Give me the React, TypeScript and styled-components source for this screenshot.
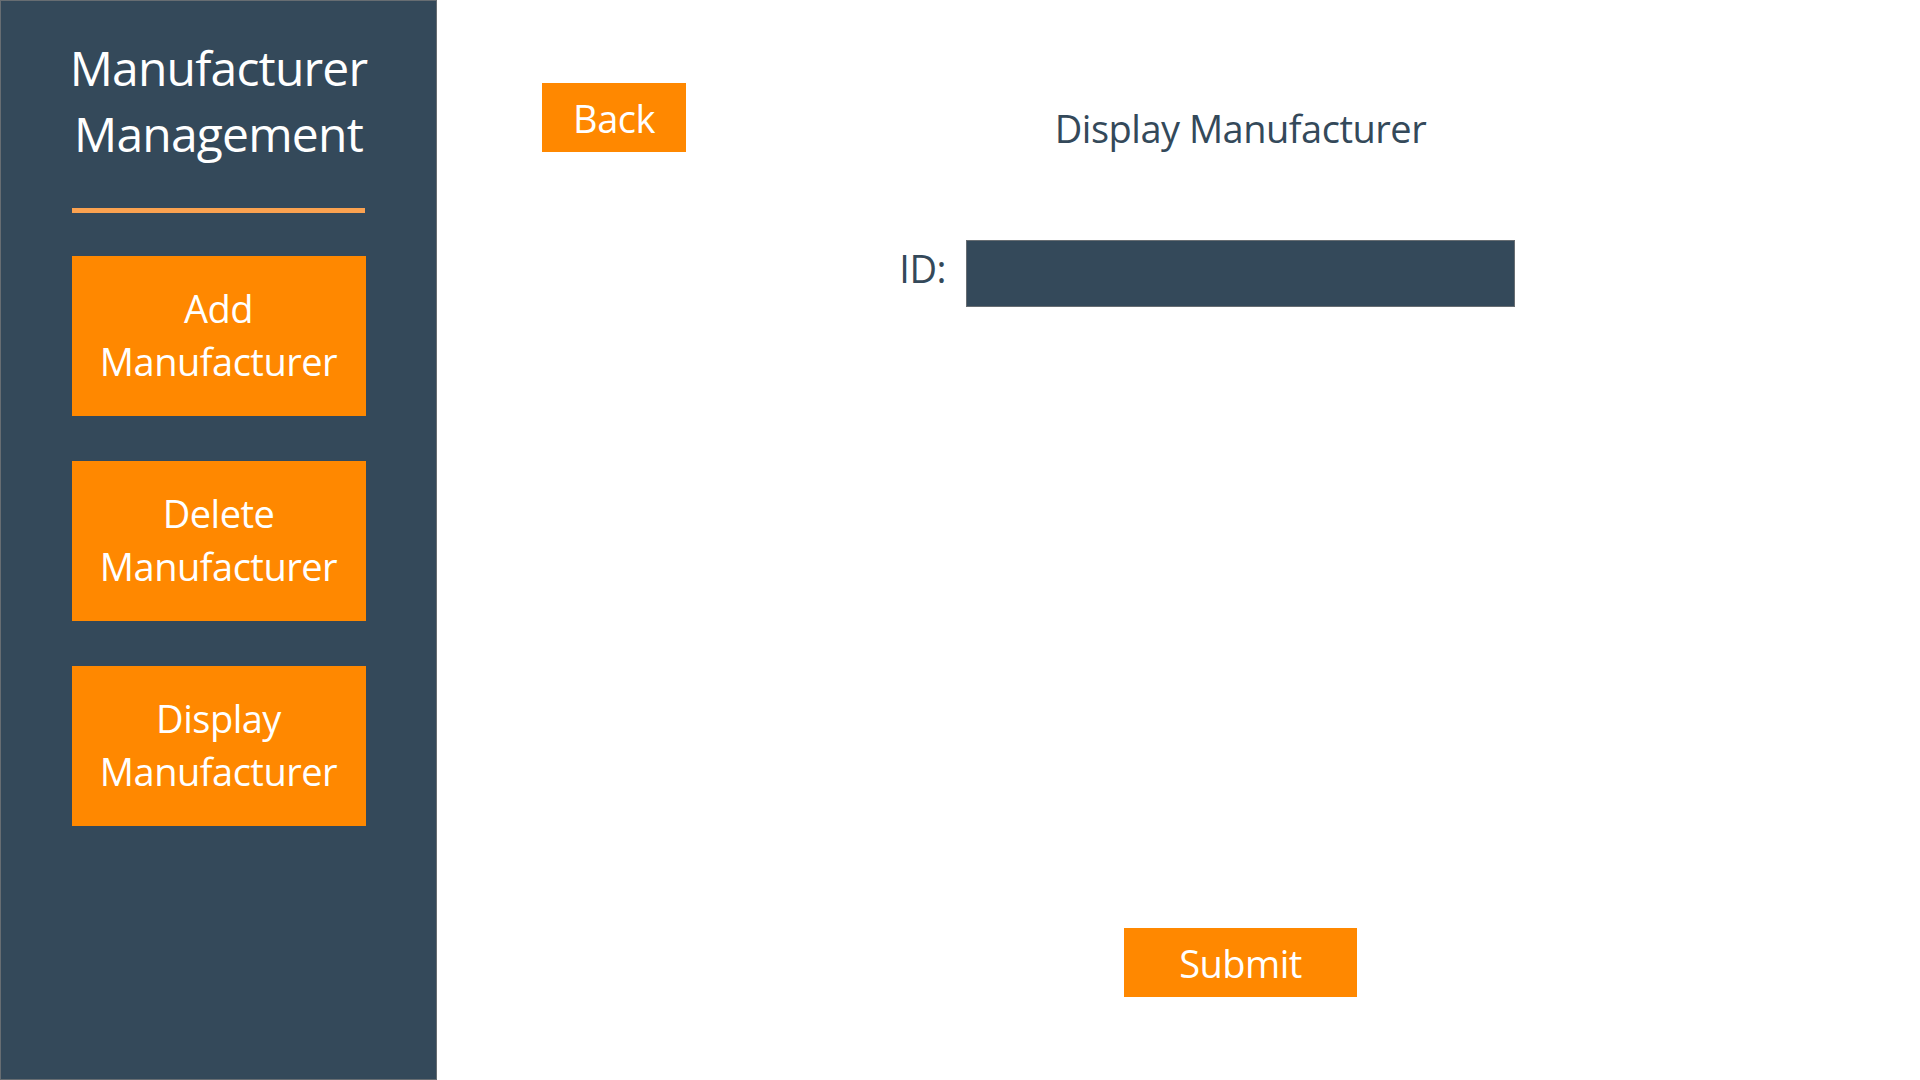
import React from "react";
import styled, { createGlobalStyle } from "styled-components";

const GlobalStyle = createGlobalStyle`
  html, body {
    margin: 0;
    padding: 0;
    background: #ffffff;
  }
  body {
    font-family: "Open Sans", "Noto Sans", sans-serif;
  }
  * { box-sizing: border-box; }
`;

const SLATE = "#34495a";
const ORANGE = "#ff8800";

const Page = styled.div`
  display: flex;
  width: 1920px;
  height: 1080px;
  overflow: hidden;
`;

const Sidebar = styled.aside`
  width: 437px;
  flex: 0 0 437px;
  height: 100%;
  background: ${SLATE};
  border: 1px solid #676d72;
  display: flex;
  flex-direction: column;
  align-items: center;
  padding-top: 34px;
`;

const SideTitle = styled.h1`
  margin: 0;
  color: #ffffff;
  font-family: "Open Sans", sans-serif;
  font-weight: 400;
  font-size: 48px;
  letter-spacing: -0.8px;
  line-height: 66px;
  text-align: center;
`;

const Divider = styled.div`
  width: 293px;
  height: 5px;
  background: #fba250;
  margin: 41px 0 43px;
`;

const NavList = styled.nav`
  display: flex;
  flex-direction: column;
  gap: 45px;
`;

const NavButton = styled.button`
  width: 294px;
  height: 160px;
  border: none;
  background: ${ORANGE};
  color: #ffffff;
  font-family: "Open Sans", sans-serif;
  font-size: 38px;
  letter-spacing: -0.5px;
  line-height: 53px;
  padding: 0 0 3px;
  cursor: pointer;
`;

const Main = styled.main`
  flex: 1;
  display: grid;
  grid-template-columns: 529px 549px;
  grid-template-rows: 69px 67px 1fr;
  row-gap: 88px;
  padding: 83px 0 83px 0;
`;

const ActionButton = styled.button<{ $width: number }>`
  width: ${(p) => p.$width}px;
  height: 69px;
  border: none;
  background: ${ORANGE};
  color: #ffffff;
  font-family: "Open Sans", sans-serif;
  font-size: 38px;
  letter-spacing: -0.5px;
  line-height: 1;
  padding: 0;
  cursor: pointer;
`;

const BackCell = styled.div`
  padding-left: 105px;
`;

const Heading = styled.h2`
  margin: 0;
  padding-top: 11px;
  color: ${SLATE};
  font-family: "Open Sans", sans-serif;
  font-weight: 400;
  font-size: 38px;
  letter-spacing: -0.5px;
  line-height: 69px;
  text-align: center;
`;

const FieldLabel = styled.label`
  justify-self: end;
  align-self: center;
  padding-right: 20px;
  padding-bottom: 12px;
  color: ${SLATE};
  font-family: "Open Sans", sans-serif;
  font-size: 38px;
  letter-spacing: -0.5px;
  line-height: 1;
`;

const FieldInput = styled.input`
  width: 549px;
  height: 67px;
  border: 1px solid #676d72;
  background: ${SLATE};
  color: #ffffff;
  font-family: "Open Sans", sans-serif;
  font-size: 30px;
  padding: 0 12px;
  outline: none;
`;

const SubmitCell = styled.div`
  grid-column: 2;
  align-self: end;
  display: flex;
  justify-content: center;
`;

export default function App() {
  return (
    <>
      <GlobalStyle />
      <Page>
        <Sidebar>
          <SideTitle>
            Manufacturer
            <br />
            Management
          </SideTitle>
          <Divider />
          <NavList>
            <NavButton>
              Add
              <br />
              Manufacturer
            </NavButton>
            <NavButton>
              Delete
              <br />
              Manufacturer
            </NavButton>
            <NavButton>
              Display
              <br />
              Manufacturer
            </NavButton>
          </NavList>
        </Sidebar>
        <Main>
          <BackCell>
            <ActionButton $width={144}>Back</ActionButton>
          </BackCell>
          <Heading>Display Manufacturer</Heading>
          <FieldLabel htmlFor="manufacturer-id">ID:</FieldLabel>
          <FieldInput id="manufacturer-id" type="text" />
          <SubmitCell>
            <ActionButton $width={233}>Submit</ActionButton>
          </SubmitCell>
        </Main>
      </Page>
    </>
  );
}
